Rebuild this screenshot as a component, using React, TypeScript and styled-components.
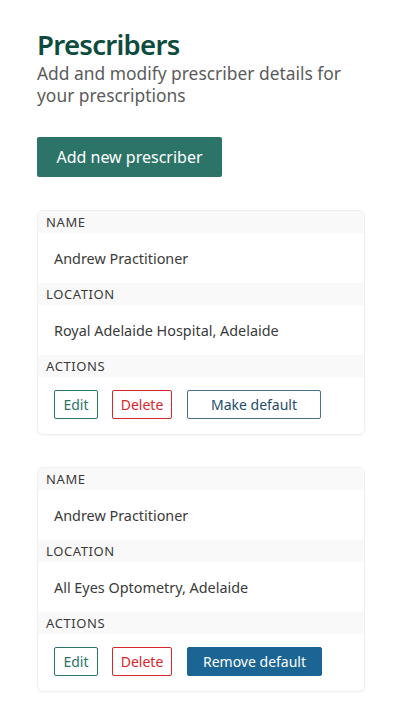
import React from "react";
import styled, { createGlobalStyle } from "styled-components";

const GlobalStyle = createGlobalStyle`
	body {
		margin: 0;
		background: #ffffff;
		font-family: "Noto Sans", "Open Sans", sans-serif;
	}
`;

const Page = styled.div`
	padding: 27px 37px 30px 37px;
`;

const Title = styled.h1`
	margin: 0;
	font-size: 27.5px;
	line-height: 35px;
	font-weight: 600;
	letter-spacing: -0.7px;
	color: #0d4b3f;
`;

const Subtitle = styled.p`
	margin: 0;
	font-size: 17.4px;
	line-height: 22px;
	color: #5b5b5b;
`;

const PrimaryButton = styled.button`
	margin-top: 31px;
	height: 40px;
	width: 185px;
	padding: 0;
	border: none;
	border-radius: 2px;
	background: #2d7468;
	color: #ffffff;
	font-family: inherit;
	font-size: 16px;
`;

const CardList = styled.div`
	margin-top: 33px;
	display: flex;
	flex-direction: column;
	gap: 32px;
`;

const Card = styled.div`
	border: 1px solid #efefef;
	border-radius: 6px;
	box-shadow: 0 1px 2px rgba(0, 0, 0, 0.04);
	overflow: hidden;
	width: 326px;
`;

const Label = styled.div`
	background: #f9f9f9;
	padding: 0 8px;
	height: 22px;
	display: flex;
	align-items: center;
	font-size: 13px;
	letter-spacing: 0.6px;
	color: #3a3a3a;
`;

const Value = styled.div`
	height: 50px;
	display: flex;
	align-items: center;
	padding: 0 16px;
	font-size: 14.4px;
	color: #3a3a3a;
`;

const Actions = styled.div`
	display: flex;
	align-items: center;
	gap: 14px;
	padding: 13px 16px 15px 16px;
`;

type Tone = "edit" | "delete" | "outline" | "solid";

const tones: Record<Tone, { border: string; color: string; bg: string }> = {
	edit: { border: "#2d7468", color: "#2d7468", bg: "#ffffff" },
	delete: { border: "#d9262c", color: "#d9262c", bg: "#ffffff" },
	outline: { border: "#4a708a", color: "#1e4d6e", bg: "#ffffff" },
	solid: { border: "#1b6595", color: "#ffffff", bg: "#1b6595" },
};

const ActionButton = styled.button<{ $tone: Tone; $width: number; $shift?: boolean }>`
	height: 29px;
	width: ${(p) => p.$width}px;
	padding: 0;
	margin-left: ${(p) => (p.$shift ? "1px" : "0")};
	border: 1.5px solid ${(p) => tones[p.$tone].border};
	border-radius: 2px;
	background: ${(p) => tones[p.$tone].bg};
	color: ${(p) => tones[p.$tone].color};
	font-family: inherit;
	font-size: 14px;
	white-space: nowrap;
`;

const prescribers = [
	{ name: "Andrew Practitioner", location: "Royal Adelaide Hospital, Adelaide", isDefault: false },
	{ name: "Andrew Practitioner", location: "All Eyes Optometry, Adelaide", isDefault: true },
];

const App: React.FC = () => {
	return (
		<>
			<GlobalStyle />
			<Page>
				<Title>Prescribers</Title>
				<Subtitle>Add and modify prescriber details for your prescriptions</Subtitle>
				<PrimaryButton>Add new prescriber</PrimaryButton>
				<CardList>
					{prescribers.map((p, i) => (
						<Card key={i}>
							<Label>NAME</Label>
							<Value>{p.name}</Value>
							<Label>LOCATION</Label>
							<Value>{p.location}</Value>
							<Label>ACTIONS</Label>
							<Actions>
								<ActionButton $tone="edit" $width={44}>
									Edit
								</ActionButton>
								<ActionButton $tone="delete" $width={60}>
									Delete
								</ActionButton>
								{p.isDefault ? (
									<ActionButton $tone="solid" $width={135} $shift>
										Remove default
									</ActionButton>
								) : (
									<ActionButton $tone="outline" $width={134} $shift>
										Make default
									</ActionButton>
								)}
							</Actions>
						</Card>
					))}
				</CardList>
			</Page>
		</>
	);
};

export default App;
